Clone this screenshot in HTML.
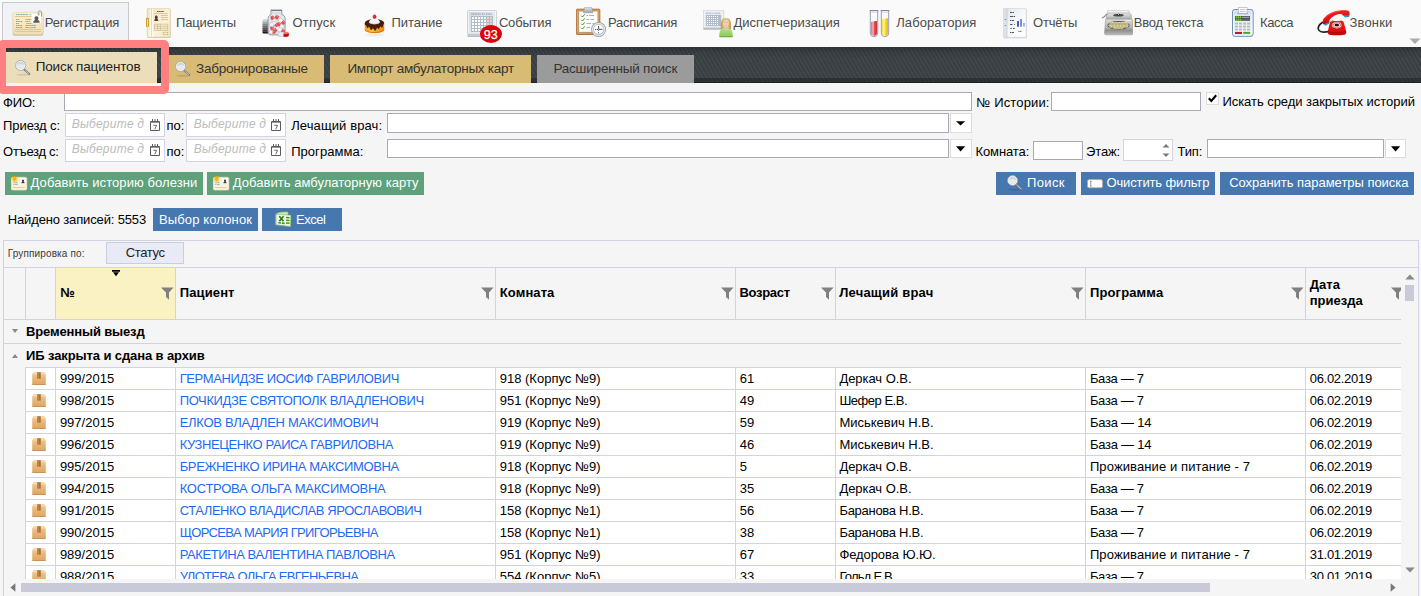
<!DOCTYPE html>
<html lang="ru"><head><meta charset="utf-8"><title>Поиск пациентов</title>
<style>
html,body{margin:0;padding:0}
body{width:1421px;height:596px;overflow:hidden;background:#f5f5f5;font-family:"Liberation Sans",sans-serif;font-size:13px;color:#000;position:relative}
div,span,svg{position:absolute;box-sizing:border-box}
.t{white-space:pre}
.nav{left:0;top:0;width:1421px;height:47px;background:#fafafa}
.navact{left:2px;top:2px;width:127px;height:46px;background:#f1f2f5;border:1px solid #c9c9c9;border-bottom:0}
.bar{left:0;top:47px;width:1421px;height:36px;background:linear-gradient(to bottom,rgba(0,0,0,.24) 0,rgba(0,0,0,.07) 6px,rgba(0,0,0,0) 12px),repeating-linear-gradient(60deg,#383e42 0,#383e42 1.8px,#40474b 1.8px,#40474b 3.6px)}
.barb{left:0;top:78px;width:1421px;height:5px;background:rgba(22,25,29,.42);border-bottom:1px solid rgba(0,0,0,.3)}
.tab{top:55px;height:28px;background:#d8bb74}
.tab.act{top:52px;height:31px;background:#ecdeba}
.tab.gray{background:#9b9b9b}
.hl{z-index:5;left:-2px;top:40px;width:171px;height:54px;border:8px solid #ff8080;border-radius:5px}
.inp{background:#fff;border:1px solid #a9a9b4}
.dinp{background:#fff;border:1px solid #d3d3e4}
.ddb{background:#fff;border:1px solid #dcdcdc}
.btn{height:23px;top:172px;background:#4677ae}
.btn.g{background:#5ea17b}
.gline{background:#d1d2e3}
.cell{background:#fff}
</style></head>
<body>
<div class="nav"></div><div class="navact"></div>
<div class="bar"></div><div class="barb"></div>
<div class="tab act" style="left:6px;width:151px"></div><div class="tab" style="left:163px;width:161px"></div><div class="tab" style="left:330px;width:201px"></div><div class="tab gray" style="left:537px;width:157px"></div>
<div class="hl"></div>
<svg style="left:1409px;top:38px" width="12" height="7" viewBox="0 0 12 7"><path d="M0.5 0.5h11L6 6z" fill="#aaa"/></svg>
<div class="inp" style="left:64px;top:92px;width:908px;height:19px"></div><div class="inp" style="left:1051px;top:92px;width:150px;height:19px"></div><div class="ddb" style="left:1206px;top:92px;width:13px;height:13px"></div><svg style="left:1207px;top:93px" width="11" height="11" viewBox="0 0 11 11"><path d="M1.800 5.300l2.500 2.700L9.200 2.300" fill="none" stroke="#000" stroke-width="2.100"/></svg>
<div class="dinp" style="left:65px;top:113px;width:100px;height:24px"></div><div class="dinp" style="left:186px;top:113px;width:100px;height:24px"></div><div class="inp" style="left:387px;top:113px;width:562px;height:20px"></div><div class="ddb" style="left:950px;top:113px;width:22px;height:20px"></div><div class="dinp" style="left:65px;top:139px;width:100px;height:23px"></div><div class="dinp" style="left:186px;top:139px;width:100px;height:23px"></div><div class="inp" style="left:387px;top:139px;width:562px;height:19px"></div><div class="ddb" style="left:950px;top:139px;width:22px;height:19px"></div>
<div class="inp" style="left:1033px;top:141px;width:50px;height:19px"></div><div class="dinp" style="left:1123px;top:139px;width:50px;height:22px"></div><div class="inp" style="left:1207px;top:139px;width:177px;height:19px"></div><div class="ddb" style="left:1385px;top:139px;width:21px;height:19px"></div>
<svg style="left:956px;top:121px" width="10" height="6" viewBox="0 0 10 6"><path d="M0 0.200h9.200L4.600 4.4z" fill="#000"/></svg><svg style="left:956px;top:146px" width="10" height="6" viewBox="0 0 10 6"><path d="M0 0.200h9.200L4.600 5.6z" fill="#000"/></svg><svg style="left:1391px;top:146px" width="10" height="6" viewBox="0 0 10 6"><path d="M0 0.200h9.200L4.600 5.6z" fill="#000"/></svg><svg style="left:1162px;top:143px" width="8" height="15" viewBox="0 0 8 15"><path d="M0.6 4.5L4 1l3.4 3.5z M0.6 10.5L4 14l3.4-3.5z" fill="#777"/></svg>
<svg style="left:150px;top:119px" width="10" height="12" viewBox="0 0 10 12"><path d="M0.500 2.500h9v9h-9z" fill="#fff" stroke="#5c5c5c" stroke-width="1"/><path d="M1 3.300h8" stroke="#5c5c5c" stroke-width=".8"/><path d="M2.500 0v3M5 0v3M7.500 0v3" stroke="#5c5c5c" stroke-width="1"/><path d="M3.300 6.300h3.200l-1.700 4" fill="none" stroke="#5c5c5c" stroke-width=".9"/></svg><svg style="left:150px;top:144px" width="10" height="12" viewBox="0 0 10 12"><path d="M0.500 2.500h9v9h-9z" fill="#fff" stroke="#5c5c5c" stroke-width="1"/><path d="M1 3.300h8" stroke="#5c5c5c" stroke-width=".8"/><path d="M2.500 0v3M5 0v3M7.500 0v3" stroke="#5c5c5c" stroke-width="1"/><path d="M3.300 6.300h3.200l-1.700 4" fill="none" stroke="#5c5c5c" stroke-width=".9"/></svg><svg style="left:271px;top:119px" width="10" height="12" viewBox="0 0 10 12"><path d="M0.500 2.500h9v9h-9z" fill="#fff" stroke="#5c5c5c" stroke-width="1"/><path d="M1 3.300h8" stroke="#5c5c5c" stroke-width=".8"/><path d="M2.500 0v3M5 0v3M7.500 0v3" stroke="#5c5c5c" stroke-width="1"/><path d="M3.300 6.300h3.200l-1.700 4" fill="none" stroke="#5c5c5c" stroke-width=".9"/></svg><svg style="left:271px;top:144px" width="10" height="12" viewBox="0 0 10 12"><path d="M0.500 2.500h9v9h-9z" fill="#fff" stroke="#5c5c5c" stroke-width="1"/><path d="M1 3.300h8" stroke="#5c5c5c" stroke-width=".8"/><path d="M2.500 0v3M5 0v3M7.500 0v3" stroke="#5c5c5c" stroke-width="1"/><path d="M3.300 6.300h3.200l-1.700 4" fill="none" stroke="#5c5c5c" stroke-width=".9"/></svg>
<div class="btn g" style="left:5px;width:198px"></div><div class="btn g" style="left:207px;width:217px"></div><div class="btn" style="left:996px;width:80px"></div><div class="btn" style="left:1081px;width:134px"></div><div class="btn" style="left:1220px;width:194px"></div><div class="btn" style="left:153px;top:208px;width:105px"></div><div class="btn" style="left:262px;top:208px;width:80px"></div>
<div style="left:3px;top:240px;width:1416px;height:360px;border:1px solid #d1d2e3;background:#f5f5f5"></div>
<div class="gline" style="left:4px;top:267px;width:1414px;height:1px"></div><div style="left:106px;top:242px;width:78px;height:22px;background:#e8ebf6;border:1px solid #c8cde2"></div>
<div style="left:56px;top:268px;width:119px;height:51px;background:#fbf2c3"></div><div class="gline" style="left:4px;top:319px;width:1397px;height:1px"></div><div class="gline" style="left:4px;top:343px;width:1397px;height:1px"></div><div class="gline" style="left:25px;top:367px;width:1376px;height:1px"></div>
<div class="gline" style="left:25px;top:268px;width:1px;height:51px"></div><div class="gline" style="left:55px;top:268px;width:1px;height:51px"></div><div class="gline" style="left:175px;top:268px;width:1px;height:51px"></div><div class="gline" style="left:495px;top:268px;width:1px;height:51px"></div><div class="gline" style="left:735px;top:268px;width:1px;height:51px"></div><div class="gline" style="left:835px;top:268px;width:1px;height:51px"></div><div class="gline" style="left:1085px;top:268px;width:1px;height:51px"></div><div class="gline" style="left:1305px;top:268px;width:1px;height:51px"></div>
<div style="left:0;top:0;width:1401px;height:579px;overflow:hidden">
<div class="cell" style="left:26px;top:368px;width:1375px;height:240px"></div>
<div class="gline" style="left:25px;top:389px;width:1376px;height:1px"></div><div class="gline" style="left:25px;top:411px;width:1376px;height:1px"></div><div class="gline" style="left:25px;top:433px;width:1376px;height:1px"></div><div class="gline" style="left:25px;top:455px;width:1376px;height:1px"></div><div class="gline" style="left:25px;top:477px;width:1376px;height:1px"></div><div class="gline" style="left:25px;top:499px;width:1376px;height:1px"></div><div class="gline" style="left:25px;top:521px;width:1376px;height:1px"></div><div class="gline" style="left:25px;top:543px;width:1376px;height:1px"></div><div class="gline" style="left:25px;top:565px;width:1376px;height:1px"></div><div class="gline" style="left:25px;top:587px;width:1376px;height:1px"></div><div class="gline" style="left:25px;top:609px;width:1376px;height:1px"></div>
<div class="gline" style="left:25px;top:367px;width:1px;height:240px"></div><div class="gline" style="left:55px;top:367px;width:1px;height:240px"></div><div class="gline" style="left:175px;top:367px;width:1px;height:240px"></div><div class="gline" style="left:495px;top:367px;width:1px;height:240px"></div><div class="gline" style="left:735px;top:367px;width:1px;height:240px"></div><div class="gline" style="left:835px;top:367px;width:1px;height:240px"></div><div class="gline" style="left:1085px;top:367px;width:1px;height:240px"></div><div class="gline" style="left:1305px;top:367px;width:1px;height:240px"></div>
<svg style="left:32px;top:372px" width="14" height="13" viewBox="0 0 14 14" preserveAspectRatio="none"><defs><linearGradient id="bx0" x1="0" y1="0" x2="0" y2="1"><stop offset="0" stop-color="#f0c994"/><stop offset="1" stop-color="#e2a662"/></linearGradient></defs><path d="M0.200 2.600L1.600 0.300h10.800l1.400 2.300V13H0.200z" fill="url(#bx0)"/><path d="M0.200 2.600L1.600 0.300h10.800l1.400 2.300z" fill="#f5d9b0"/><path d="M5.200 0.300h3.600v7.200l-0.900-0.900-0.900 0.900-0.900-0.900-0.900 0.900z" fill="#a9723c"/><path d="M6.100 0.300h0.900v6.500h-0.900z" fill="#c08a52"/><path d="M0.200 12.900h13.600v1.100H0.200z" fill="#c4935f"/></svg><svg style="left:32px;top:394px" width="14" height="13" viewBox="0 0 14 14" preserveAspectRatio="none"><defs><linearGradient id="bx1" x1="0" y1="0" x2="0" y2="1"><stop offset="0" stop-color="#f0c994"/><stop offset="1" stop-color="#e2a662"/></linearGradient></defs><path d="M0.200 2.600L1.600 0.300h10.800l1.400 2.300V13H0.200z" fill="url(#bx1)"/><path d="M0.200 2.600L1.600 0.300h10.800l1.400 2.300z" fill="#f5d9b0"/><path d="M5.200 0.300h3.600v7.200l-0.900-0.900-0.900 0.900-0.900-0.900-0.900 0.900z" fill="#a9723c"/><path d="M6.100 0.300h0.900v6.500h-0.900z" fill="#c08a52"/><path d="M0.200 12.900h13.600v1.100H0.200z" fill="#c4935f"/></svg><svg style="left:32px;top:416px" width="14" height="13" viewBox="0 0 14 14" preserveAspectRatio="none"><defs><linearGradient id="bx2" x1="0" y1="0" x2="0" y2="1"><stop offset="0" stop-color="#f0c994"/><stop offset="1" stop-color="#e2a662"/></linearGradient></defs><path d="M0.200 2.600L1.600 0.300h10.800l1.400 2.300V13H0.200z" fill="url(#bx2)"/><path d="M0.200 2.600L1.600 0.300h10.800l1.400 2.300z" fill="#f5d9b0"/><path d="M5.200 0.300h3.600v7.200l-0.900-0.900-0.900 0.900-0.900-0.900-0.900 0.900z" fill="#a9723c"/><path d="M6.100 0.300h0.900v6.500h-0.900z" fill="#c08a52"/><path d="M0.200 12.900h13.600v1.100H0.200z" fill="#c4935f"/></svg><svg style="left:32px;top:438px" width="14" height="13" viewBox="0 0 14 14" preserveAspectRatio="none"><defs><linearGradient id="bx3" x1="0" y1="0" x2="0" y2="1"><stop offset="0" stop-color="#f0c994"/><stop offset="1" stop-color="#e2a662"/></linearGradient></defs><path d="M0.200 2.600L1.600 0.300h10.800l1.400 2.300V13H0.200z" fill="url(#bx3)"/><path d="M0.200 2.600L1.600 0.300h10.800l1.400 2.300z" fill="#f5d9b0"/><path d="M5.200 0.300h3.600v7.200l-0.900-0.900-0.900 0.900-0.900-0.900-0.900 0.900z" fill="#a9723c"/><path d="M6.100 0.300h0.900v6.500h-0.900z" fill="#c08a52"/><path d="M0.200 12.900h13.600v1.100H0.200z" fill="#c4935f"/></svg><svg style="left:32px;top:460px" width="14" height="13" viewBox="0 0 14 14" preserveAspectRatio="none"><defs><linearGradient id="bx4" x1="0" y1="0" x2="0" y2="1"><stop offset="0" stop-color="#f0c994"/><stop offset="1" stop-color="#e2a662"/></linearGradient></defs><path d="M0.200 2.600L1.600 0.300h10.800l1.400 2.300V13H0.200z" fill="url(#bx4)"/><path d="M0.200 2.600L1.600 0.300h10.800l1.400 2.300z" fill="#f5d9b0"/><path d="M5.200 0.300h3.600v7.200l-0.900-0.900-0.900 0.900-0.900-0.900-0.900 0.900z" fill="#a9723c"/><path d="M6.100 0.300h0.900v6.500h-0.900z" fill="#c08a52"/><path d="M0.200 12.900h13.600v1.100H0.200z" fill="#c4935f"/></svg><svg style="left:32px;top:482px" width="14" height="13" viewBox="0 0 14 14" preserveAspectRatio="none"><defs><linearGradient id="bx5" x1="0" y1="0" x2="0" y2="1"><stop offset="0" stop-color="#f0c994"/><stop offset="1" stop-color="#e2a662"/></linearGradient></defs><path d="M0.200 2.600L1.600 0.300h10.800l1.400 2.300V13H0.200z" fill="url(#bx5)"/><path d="M0.200 2.600L1.600 0.300h10.800l1.400 2.300z" fill="#f5d9b0"/><path d="M5.200 0.300h3.600v7.200l-0.900-0.900-0.900 0.900-0.900-0.900-0.900 0.900z" fill="#a9723c"/><path d="M6.100 0.300h0.900v6.500h-0.900z" fill="#c08a52"/><path d="M0.200 12.900h13.600v1.100H0.200z" fill="#c4935f"/></svg><svg style="left:32px;top:504px" width="14" height="13" viewBox="0 0 14 14" preserveAspectRatio="none"><defs><linearGradient id="bx6" x1="0" y1="0" x2="0" y2="1"><stop offset="0" stop-color="#f0c994"/><stop offset="1" stop-color="#e2a662"/></linearGradient></defs><path d="M0.200 2.600L1.600 0.300h10.800l1.400 2.300V13H0.200z" fill="url(#bx6)"/><path d="M0.200 2.600L1.600 0.300h10.800l1.400 2.300z" fill="#f5d9b0"/><path d="M5.200 0.300h3.600v7.200l-0.900-0.900-0.900 0.900-0.900-0.900-0.900 0.900z" fill="#a9723c"/><path d="M6.100 0.300h0.900v6.500h-0.900z" fill="#c08a52"/><path d="M0.200 12.900h13.600v1.100H0.200z" fill="#c4935f"/></svg><svg style="left:32px;top:526px" width="14" height="13" viewBox="0 0 14 14" preserveAspectRatio="none"><defs><linearGradient id="bx7" x1="0" y1="0" x2="0" y2="1"><stop offset="0" stop-color="#f0c994"/><stop offset="1" stop-color="#e2a662"/></linearGradient></defs><path d="M0.200 2.600L1.600 0.300h10.800l1.400 2.300V13H0.200z" fill="url(#bx7)"/><path d="M0.200 2.600L1.600 0.300h10.800l1.400 2.300z" fill="#f5d9b0"/><path d="M5.200 0.300h3.600v7.200l-0.900-0.900-0.900 0.900-0.900-0.900-0.900 0.900z" fill="#a9723c"/><path d="M6.100 0.300h0.900v6.500h-0.900z" fill="#c08a52"/><path d="M0.200 12.900h13.600v1.100H0.200z" fill="#c4935f"/></svg><svg style="left:32px;top:548px" width="14" height="13" viewBox="0 0 14 14" preserveAspectRatio="none"><defs><linearGradient id="bx8" x1="0" y1="0" x2="0" y2="1"><stop offset="0" stop-color="#f0c994"/><stop offset="1" stop-color="#e2a662"/></linearGradient></defs><path d="M0.200 2.600L1.600 0.300h10.800l1.400 2.300V13H0.200z" fill="url(#bx8)"/><path d="M0.200 2.600L1.600 0.300h10.800l1.400 2.300z" fill="#f5d9b0"/><path d="M5.200 0.300h3.600v7.200l-0.900-0.900-0.900 0.900-0.900-0.900-0.900 0.900z" fill="#a9723c"/><path d="M6.100 0.300h0.900v6.500h-0.900z" fill="#c08a52"/><path d="M0.200 12.900h13.600v1.100H0.200z" fill="#c4935f"/></svg><svg style="left:32px;top:570px" width="14" height="13" viewBox="0 0 14 14" preserveAspectRatio="none"><defs><linearGradient id="bx9" x1="0" y1="0" x2="0" y2="1"><stop offset="0" stop-color="#f0c994"/><stop offset="1" stop-color="#e2a662"/></linearGradient></defs><path d="M0.200 2.600L1.600 0.300h10.800l1.400 2.300V13H0.200z" fill="url(#bx9)"/><path d="M0.200 2.600L1.600 0.300h10.800l1.400 2.300z" fill="#f5d9b0"/><path d="M5.200 0.300h3.600v7.200l-0.900-0.900-0.900 0.900-0.900-0.900-0.900 0.900z" fill="#a9723c"/><path d="M6.100 0.300h0.900v6.500h-0.900z" fill="#c08a52"/><path d="M0.200 12.900h13.600v1.100H0.200z" fill="#c4935f"/></svg>
<span class="t" style="left:59.9px;top:370.5px;font-size:13px;line-height:16px;">999/2015</span>
<span class="t" style="left:179.7px;top:370.5px;font-size:13px;line-height:16px;letter-spacing:-0.39px;color:#1f69f0;">ГЕРМАНИДЗЕ ИОСИФ ГАВРИЛОВИЧ</span>
<span class="t" style="left:499.7px;top:370.5px;font-size:13px;line-height:16px;letter-spacing:0.01px;">918 (Корпус №9)</span>
<span class="t" style="left:739.7px;top:370.5px;font-size:13px;line-height:16px;">61</span>
<span class="t" style="left:839.4px;top:370.5px;font-size:13px;line-height:16px;letter-spacing:-0.04px;">Деркач О.В.</span>
<span class="t" style="left:1089.9px;top:370.5px;font-size:13px;line-height:16px;letter-spacing:-0.30px;">База — 7</span>
<span class="t" style="left:1309.7px;top:370.5px;font-size:13px;line-height:16px;letter-spacing:-0.29px;">06.02.2019</span>
<span class="t" style="left:59.9px;top:392.5px;font-size:13px;line-height:16px;">998/2015</span>
<span class="t" style="left:179.7px;top:392.5px;font-size:13px;line-height:16px;letter-spacing:-0.38px;color:#1f69f0;">ПОЧКИДЗЕ СВЯТОПОЛК ВЛАДЛЕНОВИЧ</span>
<span class="t" style="left:499.7px;top:392.5px;font-size:13px;line-height:16px;letter-spacing:0.01px;">951 (Корпус №9)</span>
<span class="t" style="left:739.7px;top:392.5px;font-size:13px;line-height:16px;">49</span>
<span class="t" style="left:839.4px;top:392.5px;font-size:13px;line-height:16px;letter-spacing:-0.48px;">Шефер Е.В.</span>
<span class="t" style="left:1089.9px;top:392.5px;font-size:13px;line-height:16px;letter-spacing:-0.30px;">База — 7</span>
<span class="t" style="left:1309.7px;top:392.5px;font-size:13px;line-height:16px;letter-spacing:-0.29px;">06.02.2019</span>
<span class="t" style="left:59.9px;top:414.5px;font-size:13px;line-height:16px;">997/2015</span>
<span class="t" style="left:179.7px;top:414.5px;font-size:13px;line-height:16px;letter-spacing:-0.28px;color:#1f69f0;">ЕЛКОВ ВЛАДЛЕН МАКСИМОВИЧ</span>
<span class="t" style="left:499.7px;top:414.5px;font-size:13px;line-height:16px;letter-spacing:0.01px;">919 (Корпус №9)</span>
<span class="t" style="left:739.7px;top:414.5px;font-size:13px;line-height:16px;">59</span>
<span class="t" style="left:839.4px;top:414.5px;font-size:13px;line-height:16px;">Миськевич Н.В.</span>
<span class="t" style="left:1089.9px;top:414.5px;font-size:13px;line-height:16px;letter-spacing:-0.24px;">База — 14</span>
<span class="t" style="left:1309.7px;top:414.5px;font-size:13px;line-height:16px;letter-spacing:-0.29px;">06.02.2019</span>
<span class="t" style="left:59.9px;top:436.5px;font-size:13px;line-height:16px;">996/2015</span>
<span class="t" style="left:179.7px;top:436.5px;font-size:13px;line-height:16px;letter-spacing:-0.42px;color:#1f69f0;">КУЗНЕЦЕНКО РАИСА ГАВРИЛОВНА</span>
<span class="t" style="left:499.7px;top:436.5px;font-size:13px;line-height:16px;letter-spacing:0.01px;">919 (Корпус №9)</span>
<span class="t" style="left:739.7px;top:436.5px;font-size:13px;line-height:16px;">46</span>
<span class="t" style="left:839.4px;top:436.5px;font-size:13px;line-height:16px;">Миськевич Н.В.</span>
<span class="t" style="left:1089.9px;top:436.5px;font-size:13px;line-height:16px;letter-spacing:-0.24px;">База — 14</span>
<span class="t" style="left:1309.7px;top:436.5px;font-size:13px;line-height:16px;letter-spacing:-0.29px;">06.02.2019</span>
<span class="t" style="left:59.9px;top:458.5px;font-size:13px;line-height:16px;">995/2015</span>
<span class="t" style="left:179.7px;top:458.5px;font-size:13px;line-height:16px;letter-spacing:-0.37px;color:#1f69f0;">БРЕЖНЕНКО ИРИНА МАКСИМОВНА</span>
<span class="t" style="left:499.7px;top:458.5px;font-size:13px;line-height:16px;letter-spacing:0.01px;">918 (Корпус №9)</span>
<span class="t" style="left:739.7px;top:458.5px;font-size:13px;line-height:16px;">5</span>
<span class="t" style="left:839.4px;top:458.5px;font-size:13px;line-height:16px;letter-spacing:-0.04px;">Деркач О.В.</span>
<span class="t" style="left:1089.9px;top:458.5px;font-size:13px;line-height:16px;letter-spacing:0.11px;">Проживание и питание - 7</span>
<span class="t" style="left:1309.7px;top:458.5px;font-size:13px;line-height:16px;letter-spacing:-0.29px;">06.02.2019</span>
<span class="t" style="left:59.9px;top:480.5px;font-size:13px;line-height:16px;">994/2015</span>
<span class="t" style="left:179.7px;top:480.5px;font-size:13px;line-height:16px;letter-spacing:-0.26px;color:#1f69f0;">КОСТРОВА ОЛЬГА МАКСИМОВНА</span>
<span class="t" style="left:499.7px;top:480.5px;font-size:13px;line-height:16px;letter-spacing:0.01px;">918 (Корпус №9)</span>
<span class="t" style="left:739.7px;top:480.5px;font-size:13px;line-height:16px;">35</span>
<span class="t" style="left:839.4px;top:480.5px;font-size:13px;line-height:16px;letter-spacing:-0.04px;">Деркач О.В.</span>
<span class="t" style="left:1089.9px;top:480.5px;font-size:13px;line-height:16px;letter-spacing:-0.30px;">База — 7</span>
<span class="t" style="left:1309.7px;top:480.5px;font-size:13px;line-height:16px;letter-spacing:-0.29px;">06.02.2019</span>
<span class="t" style="left:59.9px;top:502.5px;font-size:13px;line-height:16px;">991/2015</span>
<span class="t" style="left:179.7px;top:502.5px;font-size:13px;line-height:16px;letter-spacing:-0.44px;color:#1f69f0;">СТАЛЕНКО ВЛАДИСЛАВ ЯРОСЛАВОВИЧ</span>
<span class="t" style="left:499.7px;top:502.5px;font-size:13px;line-height:16px;letter-spacing:0.01px;">158 (Корпус №1)</span>
<span class="t" style="left:739.7px;top:502.5px;font-size:13px;line-height:16px;">56</span>
<span class="t" style="left:839.4px;top:502.5px;font-size:13px;line-height:16px;letter-spacing:-0.28px;">Баранова Н.В.</span>
<span class="t" style="left:1089.9px;top:502.5px;font-size:13px;line-height:16px;letter-spacing:-0.30px;">База — 7</span>
<span class="t" style="left:1309.7px;top:502.5px;font-size:13px;line-height:16px;letter-spacing:-0.29px;">06.02.2019</span>
<span class="t" style="left:59.9px;top:524.5px;font-size:13px;line-height:16px;">990/2015</span>
<span class="t" style="left:179.7px;top:524.5px;font-size:13px;line-height:16px;letter-spacing:-0.64px;color:#1f69f0;">ЩОРСЕВА МАРИЯ ГРИГОРЬЕВНА</span>
<span class="t" style="left:499.7px;top:524.5px;font-size:13px;line-height:16px;letter-spacing:0.01px;">158 (Корпус №1)</span>
<span class="t" style="left:739.7px;top:524.5px;font-size:13px;line-height:16px;">38</span>
<span class="t" style="left:839.4px;top:524.5px;font-size:13px;line-height:16px;letter-spacing:-0.28px;">Баранова Н.В.</span>
<span class="t" style="left:1089.9px;top:524.5px;font-size:13px;line-height:16px;letter-spacing:-0.30px;">База — 7</span>
<span class="t" style="left:1309.7px;top:524.5px;font-size:13px;line-height:16px;letter-spacing:-0.29px;">06.02.2019</span>
<span class="t" style="left:59.9px;top:546.5px;font-size:13px;line-height:16px;">989/2015</span>
<span class="t" style="left:179.7px;top:546.5px;font-size:13px;line-height:16px;letter-spacing:-0.42px;color:#1f69f0;">РАКЕТИНА ВАЛЕНТИНА ПАВЛОВНА</span>
<span class="t" style="left:499.7px;top:546.5px;font-size:13px;line-height:16px;letter-spacing:0.01px;">951 (Корпус №9)</span>
<span class="t" style="left:739.7px;top:546.5px;font-size:13px;line-height:16px;">67</span>
<span class="t" style="left:839.4px;top:546.5px;font-size:13px;line-height:16px;letter-spacing:-0.08px;">Федорова Ю.Ю.</span>
<span class="t" style="left:1089.9px;top:546.5px;font-size:13px;line-height:16px;letter-spacing:0.11px;">Проживание и питание - 7</span>
<span class="t" style="left:1309.7px;top:546.5px;font-size:13px;line-height:16px;letter-spacing:-0.29px;">31.01.2019</span>
<span class="t" style="left:59.9px;top:568.5px;font-size:13px;line-height:16px;">988/2015</span>
<span class="t" style="left:179.7px;top:568.5px;font-size:13px;line-height:16px;letter-spacing:-0.71px;color:#1f69f0;">УЛОТЕВА ОЛЬГА ЕВГЕНЬЕВНА</span>
<span class="t" style="left:499.7px;top:568.5px;font-size:13px;line-height:16px;letter-spacing:0.01px;">554 (Корпус №5)</span>
<span class="t" style="left:739.7px;top:568.5px;font-size:13px;line-height:16px;">33</span>
<span class="t" style="left:839.4px;top:568.5px;font-size:13px;line-height:16px;letter-spacing:-0.78px;">Гольд Е.В.</span>
<span class="t" style="left:1089.9px;top:568.5px;font-size:13px;line-height:16px;letter-spacing:-0.30px;">База — 7</span>
<span class="t" style="left:1309.7px;top:568.5px;font-size:13px;line-height:16px;letter-spacing:-0.29px;">30.01.2019</span>
</div>
<svg style="left:161px;top:287px" width="13" height="13" viewBox="0 0 13 13"><path d="M0 0.500h12.500L8 5.500V12.800L5 10V5.500z" fill="#808080"/></svg><svg style="left:481px;top:287px" width="13" height="13" viewBox="0 0 13 13"><path d="M0 0.500h12.500L8 5.500V12.800L5 10V5.500z" fill="#808080"/></svg><svg style="left:721px;top:287px" width="13" height="13" viewBox="0 0 13 13"><path d="M0 0.500h12.500L8 5.500V12.800L5 10V5.500z" fill="#808080"/></svg><svg style="left:821px;top:287px" width="13" height="13" viewBox="0 0 13 13"><path d="M0 0.500h12.500L8 5.500V12.800L5 10V5.500z" fill="#808080"/></svg><svg style="left:1071px;top:287px" width="13" height="13" viewBox="0 0 13 13"><path d="M0 0.500h12.500L8 5.500V12.800L5 10V5.500z" fill="#808080"/></svg><svg style="left:1291px;top:287px" width="13" height="13" viewBox="0 0 13 13"><path d="M0 0.500h12.500L8 5.500V12.800L5 10V5.500z" fill="#808080"/></svg><svg style="left:1391px;top:287px" width="10" height="13" viewBox="0 0 10 13"><path d="M0 0.500h12.500L8 5.500V12.800L5 10V5.500z" fill="#808080"/></svg>
<svg style="left:111px;top:270px" width="10" height="7" viewBox="0 0 10 7"><path d="M1 0h8v1.700H1zM2 2.200h6L5 6.300z" fill="#000"/></svg>
<svg style="left:11px;top:328px" width="8" height="6" viewBox="0 0 8 6"><path d="M1 1h6L4 5z" fill="#888"/></svg><svg style="left:11px;top:353px" width="8" height="6" viewBox="0 0 8 6"><path d="M1 5h6L4 1z" fill="#888"/></svg>
<svg style="left:1405px;top:274px" width="10" height="6" viewBox="0 0 10 6"><path d="M0.3 5.4h9.4L5 0.4z" fill="#888"/></svg><div style="left:1405px;top:285px;width:9px;height:16px;background:#c8cad9"></div><svg style="left:1405px;top:567px" width="10" height="6" viewBox="0 0 10 6"><path d="M0.3 0.6h9.4L5 5.6z" fill="#888"/></svg>
<div style="left:21px;top:583px;width:1189px;height:9px;background:#c8cad9"></div><svg style="left:10px;top:583px" width="6" height="9" viewBox="0 0 6 9"><path d="M5.4 0.2v8.6L0.4 4.5z" fill="#777"/></svg><svg style="left:1390px;top:583px" width="6" height="9" viewBox="0 0 6 9"><path d="M0.6 0.2v8.6L5.6 4.5z" fill="#777"/></svg>
<svg style="left:12px;top:9px" width="32" height="28" viewBox="0 0 32 28"><defs><linearGradient id="rg" x1="0" y1="0" x2="0" y2="1"><stop offset="0" stop-color="#faf0d2"/><stop offset="1" stop-color="#f0dfb2"/></linearGradient></defs><rect x="0.9" y="3.900" width="30.300" height="22.700" rx="2.200" fill="#a8966e" opacity=".8"/><rect x="0.9" y="3.200" width="30.300" height="22.300" rx="2.200" fill="url(#rg)" stroke="#e2d2a8" stroke-width=".6"/><path d="M4 5.500h12" stroke="#2a7898" stroke-width=".65" opacity=".8" stroke-dasharray="1.300 .35"/><path d="M17.500 5.500h2" stroke="#2a7898" stroke-width=".65" opacity=".5"/><path d="M3 7.500h17" stroke="#d8c596" stroke-width=".9"/><g stroke="#2a7898" stroke-width=".65" opacity=".85" stroke-dasharray="1.300 .35"><path d="M4 10.500h3.500M4 12.500h6.500M4 14.500h3M4 16.500h6.500M4 18.500h6.500"/><path d="M13.500 10.500h6M13.500 12.500h4.500M14.500 14.500h8M13.500 16.500h10.500M13.500 18.500h4M18.500 18.500h5.500"/></g><path d="M3 20.500h26M3 22.500h26" stroke="#d8c596" stroke-width=".9"/><rect x="19.900" y="5.300" width="10" height="9.800" fill="#a89770" opacity=".5"/><rect x="19.600" y="4.900" width="10" height="9.800" fill="#fff"/><path d="M21.300 13.700c0-2.200.8-2.300 2-2.700-1.400-1.200-.9-3.700 1.200-3.700s2.600 2.500 1.200 3.700c1.200.4 2 .5 2 2.700z" fill="#5d5a55"/><path d="M26.300 6.500V3.500a1.600 1.600 0 0 1 3.200 0v4" fill="none" stroke="#8d8d8d" stroke-width=".8"/><path d="M27.500 6.500V4" stroke="#bbb" stroke-width=".7"/></svg>
<svg style="left:146px;top:8px" width="26" height="30" viewBox="0 0 26 30"><defs><linearGradient id="pg" x1="0" y1="0" x2="1" y2="1"><stop offset="0" stop-color="#f3e2b8"/><stop offset=".6" stop-color="#fbf3dc"/><stop offset="1" stop-color="#f3e3bb"/></linearGradient></defs><rect x="1.500" y="0.9" width="23" height="29" rx=".8" fill="#b9a780" opacity=".7"/><rect x="1.200" y="0.400" width="23" height="28.900" rx=".8" fill="url(#pg)" stroke="#dccba0" stroke-width=".6"/><path d="M4.300 0.700v28.300M6.700 0.700v28.300" stroke="#fffdf5" stroke-width=".9"/><path d="M5.500 0.700v28.300" stroke="#e3d2a6" stroke-width=".7"/><rect x="0.500" y="10.300" width="2" height="8" fill="#f0dc9a" stroke="#c59410" stroke-width=".8"/><path d="M11 3.500h7" stroke="#5a5346" stroke-width="1" stroke-dasharray="1.600 .5"/><path d="M8 5.600h14" stroke="#d4c190" stroke-width=".8"/><path d="M8.300 13c0-1.600.4-1.800 1.100-2-.9-.8-.8-3.500.9-3.500s1.800 2.700.9 3.500c.7.200 1.100.4 1.100 2z" fill="#4a4032"/><path d="M15 7.500h7M15 9.500h7M15 11.600h7" stroke="#d4c190" stroke-width=".9"/><path d="M8.400 16.200h13.300v6.200H8.400zM8.400 18.300h13.300M8.400 20.300h13.300M11.500 16.200v6.200M14.300 16.200v6.200" fill="none" stroke="#d0bd8c" stroke-width=".8"/><rect x="17.200" y="24.300" width="4.500" height="2.300" fill="#fbf3dc" stroke="#d0bd8c" stroke-width=".8"/></svg>
<svg style="left:262px;top:9px" width="28" height="28" viewBox="0 0 28 28"><defs><linearGradient id="lg" x1="0" y1="0" x2="0" y2="1"><stop offset="0" stop-color="#e8e8e8"/><stop offset=".35" stop-color="#8a8a8a"/><stop offset="1" stop-color="#0c0c0c"/></linearGradient><linearGradient id="cp" x1="0" y1="0" x2="0" y2="1"><stop offset="0" stop-color="#ff6a6a"/><stop offset=".5" stop-color="#d60d12"/><stop offset="1" stop-color="#a00"/></linearGradient></defs><path d="M1.500 10h5v14.500h-5a1 1 0 0 1-1-1v-12.500a1 1 0 0 1 1-1z" fill="url(#lg)"/><path d="M0.500 12.500h6M0.500 14.500h6M0.500 16.500h6M0.500 18.500h6M0.500 20.500h6M0.500 22.500h6" stroke="#fff" stroke-width=".4" opacity=".45"/><path d="M9 1.300h10.800v4.200c2.200.7 3.300 1.900 3.300 4.200v13.300c0 1.900-1 2.900-2.900 2.900H9c-1.900 0-2.900-1-2.900-2.900V9.700c0-2.300 1.100-3.500 2.900-4.200z" fill="#e3e7ec" stroke="#8793a6" stroke-width=".9"/><path d="M8.800 1.300h11.200" stroke="#6f7a8c" stroke-width="1.200"/><path d="M9.300 3.500c3 1 7 1 10.300 0" fill="none" stroke="#c5ccd6" stroke-width=".7"/><g transform="rotate(62 11.3 10.3)"><rect x="7.50" y="8.45" width="7.60" height="3.70" rx="1.85" fill="#f1f3f6" stroke="#aeb4bd" stroke-width=".35"/><path d="M9.35 8.45h1.95v3.70h-1.95a1.85 1.85 0 0 1 0-3.70z" fill="#e2474c"/><path d="M8.70 9.45h5.20" stroke="#fff" stroke-width=".6" opacity=".55"/></g><g transform="rotate(35 16.5 9.3)"><rect x="12.70" y="7.45" width="7.60" height="3.70" rx="1.85" fill="#f1f3f6" stroke="#aeb4bd" stroke-width=".35"/><path d="M14.55 7.45h1.95v3.70h-1.95a1.85 1.85 0 0 1 0-3.70z" fill="#e2474c"/><path d="M13.90 8.45h5.20" stroke="#fff" stroke-width=".6" opacity=".55"/></g><g transform="rotate(40 20 12.5)"><rect x="16.20" y="10.65" width="7.60" height="3.70" rx="1.85" fill="#e2474c" stroke="#aeb4bd" stroke-width=".35"/><path d="M18.05 10.65h1.95v3.70h-1.95a1.85 1.85 0 0 1 0-3.70z" fill="#f1f3f6"/><path d="M17.40 11.65h5.20" stroke="#fff" stroke-width=".6" opacity=".55"/></g><g transform="rotate(35 13.2 15.2)"><rect x="9.40" y="13.35" width="7.60" height="3.70" rx="1.85" fill="#e2474c" stroke="#aeb4bd" stroke-width=".35"/><path d="M11.25 13.35h1.95v3.70h-1.95a1.85 1.85 0 0 1 0-3.70z" fill="#f1f3f6"/><path d="M10.60 14.35h5.20" stroke="#fff" stroke-width=".6" opacity=".55"/></g><g transform="rotate(35 18.3 16.3)"><rect x="14.50" y="14.45" width="7.60" height="3.70" rx="1.85" fill="#f1f3f6" stroke="#aeb4bd" stroke-width=".35"/><path d="M16.35 14.45h1.95v3.70h-1.95a1.85 1.85 0 0 1 0-3.70z" fill="#e2474c"/><path d="M15.70 15.45h5.20" stroke="#fff" stroke-width=".6" opacity=".55"/></g><g transform="rotate(80 9.8 17.5)"><rect x="6.00" y="15.65" width="7.60" height="3.70" rx="1.85" fill="#e2474c" stroke="#aeb4bd" stroke-width=".35"/><path d="M7.85 15.65h1.95v3.70h-1.95a1.85 1.85 0 0 1 0-3.70z" fill="#f1f3f6"/><path d="M7.20 16.65h5.20" stroke="#fff" stroke-width=".6" opacity=".55"/></g><g transform="rotate(-30 14.5 20.3)"><rect x="10.70" y="18.45" width="7.60" height="3.70" rx="1.85" fill="#f1f3f6" stroke="#aeb4bd" stroke-width=".35"/><path d="M12.55 18.45h1.95v3.70h-1.95a1.85 1.85 0 0 1 0-3.70z" fill="#e2474c"/><path d="M11.90 19.45h5.20" stroke="#fff" stroke-width=".6" opacity=".55"/></g><g transform="rotate(20 19.5 21.3)"><rect x="15.70" y="19.45" width="7.60" height="3.70" rx="1.85" fill="#e2474c" stroke="#aeb4bd" stroke-width=".35"/><path d="M17.55 19.45h1.95v3.70h-1.95a1.85 1.85 0 0 1 0-3.70z" fill="#f1f3f6"/><path d="M16.90 20.45h5.20" stroke="#fff" stroke-width=".6" opacity=".55"/></g><g transform="rotate(0 10.5 23.3)"><rect x="7.25" y="21.80" width="6.50" height="3.00" rx="1.50" fill="#e2474c" stroke="#aeb4bd" stroke-width=".35"/><path d="M8.75 21.80h1.75v3.00h-1.75a1.50 1.50 0 0 1 0-3.00z" fill="#f1f3f6"/><path d="M8.45 22.80h4.10" stroke="#fff" stroke-width=".6" opacity=".55"/></g><rect x="16" y="23.100" width="11" height="4.700" rx="2.350" fill="#e4e9ed" stroke="#a9b1ba" stroke-width=".5"/><path d="M21.500 23.100h3.150a2.350 2.350 0 0 1 0 4.700H21.500z" fill="url(#cp)"/><path d="M17.500 24.200h8" stroke="#fff" stroke-width=".8" opacity=".6"/></svg>
<svg style="left:364px;top:13px" width="22" height="24" viewBox="0 0 22 24"><defs><linearGradient id="ck" x1="0" y1="0" x2="1" y2="0"><stop offset="0" stop-color="#f2a018"/><stop offset=".35" stop-color="#f9c132"/><stop offset="1" stop-color="#e8860f"/></linearGradient></defs><ellipse cx="10.5" cy="21.8" rx="9" ry="1.6" fill="#e9c9a0" opacity=".3"/><path d="M0.8 10v6.5c0 2.100 4.300 3.500 9.700 3.500s9.700-1.400 9.700-3.500V10z" fill="url(#ck)"/><path d="M0.8 15.500c0 2.100 4.300 3.500 9.700 3.500s9.700-1.400 9.700-3.500v1c0 2.100-4.300 3.500-9.700 3.500s-9.700-1.400-9.700-3.500z" fill="#d9640a" opacity=".8"/><ellipse cx="10.5" cy="10" rx="9.700" ry="3.900" fill="#4a1d0f"/><path d="M0.8 10v1.800c.6 1 1.100.2 1.600 1.300s.6 2 1.300 2 .6-1.300 1.300-1.300 1 2.900 2 3.200 1.100-1.500 2-1.500 1 2.200 2 2.200 1.200-2.600 2.100-2.800.8 1 1.600 1 1-2.300 1.800-2.500.700 1.200 1.300 1.200.9-1 1.300-2.400V10z" fill="#4a1d0f"/><path d="M4.800 9.300c.5-1.700 1.800-2.200 2.600-3.500.7-1.200 1.700-2 3.100-2s2.300.8 3 2c.8 1.300 2.100 1.800 2.600 3.500-1.300 1.500-3.400 1.900-5.600 1.900s-4.400-.4-5.700-1.900z" fill="#f7f7f7"/><path d="M5.500 9.600c1.500 1 3.300 1.200 5 1.200s3.500-.2 5-1.200" fill="none" stroke="#c9cdd2" stroke-width=".8"/><path d="M8.700 3.800c0-1.500.8-2.400 1.800-2.400s1.900.9 1.900 2.400-.9 2-1.900 2-1.800-.5-1.800-2z" fill="#d8242a"/><circle cx="10" cy="3" r=".5" fill="#ff8a80"/></svg>
<svg style="left:467px;top:10px" width="30" height="28" viewBox="0 0 30 28"><defs><linearGradient id="cg" x1="0" y1="0" x2="1" y2="1"><stop offset="0" stop-color="#cfd9e2"/><stop offset="1" stop-color="#f2f5f8"/></linearGradient></defs><path d="M0.500 23.500h29v2.700a.8.8 0 0 1-.8.800H1.300a.8.8 0 0 1-.8-.8z" fill="#aeb5bc"/><path d="M0.500 24.700h29M0.500 25.900h29" stroke="#e8ebee" stroke-width=".5"/><rect x="0.500" y="0.500" width="29" height="23.500" rx=".8" fill="#f7f8f9" stroke="#c3c8ce" stroke-width=".8"/><rect x="1.800" y="1.800" width="26.400" height="21" fill="url(#cg)"/><path d="M4.500 4h9.500M15 4h3M19 4h6" stroke="#8f99a5" stroke-width="1.400" stroke-dasharray="1 .6" opacity=".8"/><rect x="4" y="6" width="22" height="16" fill="#b3bdc8"/><path d="M5.0 7.0h2.0v2.0h-2.0zM8.0 7.0h2.0v2.0h-2.0zM11.0 7.0h2.0v2.0h-2.0zM14.0 7.0h2.0v2.0h-2.0zM17.0 7.0h2.0v2.0h-2.0zM5.0 10.0h2.0v2.0h-2.0zM8.0 10.0h2.0v2.0h-2.0zM11.0 10.0h2.0v2.0h-2.0zM14.0 10.0h2.0v2.0h-2.0zM17.0 10.0h2.0v2.0h-2.0zM5.0 13.0h2.0v2.0h-2.0zM8.0 13.0h2.0v2.0h-2.0zM11.0 13.0h2.0v2.0h-2.0zM14.0 13.0h2.0v2.0h-2.0zM17.0 13.0h2.0v2.0h-2.0zM5.0 16.0h2.0v2.0h-2.0zM8.0 16.0h2.0v2.0h-2.0zM11.0 16.0h2.0v2.0h-2.0zM14.0 16.0h2.0v2.0h-2.0zM17.0 16.0h2.0v2.0h-2.0zM20.0 16.0h2.0v2.0h-2.0zM23.0 16.0h2.0v2.0h-2.0zM5.0 19.0h2.0v2.0h-2.0zM8.0 19.0h2.0v2.0h-2.0zM11.0 19.0h2.0v2.0h-2.0zM14.0 19.0h2.0v2.0h-2.0zM17.0 19.0h2.0v2.0h-2.0zM20.0 19.0h2.0v2.0h-2.0zM23.0 19.0h2.0v2.0h-2.0z" fill="#fff"/><path d="M20.0 7.0h2.0v2.0h-2.0zM23.0 7.0h2.0v2.0h-2.0zM20.0 10.0h2.0v2.0h-2.0zM23.0 10.0h2.0v2.0h-2.0zM20.0 13.0h2.0v2.0h-2.0zM23.0 13.0h2.0v2.0h-2.0z" fill="#ffc9d2"/></svg>
<svg style="left:576px;top:7px" width="31" height="30" viewBox="0 0 31 30"><defs><linearGradient id="cb" x1="0" y1="0" x2="1" y2="0"><stop offset="0" stop-color="#c98a4a"/><stop offset=".5" stop-color="#b26d2c"/><stop offset="1" stop-color="#c98a4a"/></linearGradient><linearGradient id="cm" x1="0" y1="0" x2="0" y2="1"><stop offset="0" stop-color="#e4e6e8"/><stop offset="1" stop-color="#9da1a6"/></linearGradient></defs><rect x="0.300" y="2.300" width="23.700" height="25.800" rx="1.300" fill="#8a5322" opacity=".55"/><rect x="0.300" y="2" width="23.700" height="25.500" rx="1.300" fill="url(#cb)" stroke="#a5652a" stroke-width=".6"/><rect x="1.500" y="3.200" width="21.300" height="23.100" rx=".8" fill="none" stroke="#e0ad74" stroke-width=".8"/><rect x="3" y="4.500" width="18.500" height="20.500" fill="#fdfdfd" stroke="#c9d4df" stroke-width=".6"/><path d="M9.500 0.300h5.300c.8 0 1.300.5 1.300 1.300V3h.6v2.800H7.500V3h.7V1.600c0-.8.500-1.300 1.300-1.300z" fill="url(#cm)" stroke="#8c9096" stroke-width=".5"/><g stroke="#3a9a12" stroke-width="1" fill="none"><path d="M5.200 8.700l1.300 1.300 2.300-2.700M5.200 12.700l1.300 1.300 2.300-2.700M5.200 16.700l1.300 1.300 2.300-2.700M5.200 20.700l1.300 1.300 2.300-2.700"/></g><path d="M10.500 8.500h1.500M13 8.500h5M10.500 12.500h2.500M14.500 12.500h3.500M10.500 16.500h4.500M16.500 16.500h2M10.500 20.500h3.500" stroke="#a9aeb4" stroke-width="1"/><circle cx="22.600" cy="22.400" r="7.400" fill="#8f9398"/><circle cx="22.600" cy="22.400" r="6.700" fill="#e3e5e7"/><circle cx="22.600" cy="22.400" r="5.300" fill="#aeb1b5"/><circle cx="22.600" cy="22.400" r="4.700" fill="#fdfdfd"/><path d="M22.600 19v4.600M20.800 22.400h5.600" stroke="#222" stroke-width=".8"/><circle cx="22.600" cy="22.400" r=".8" fill="#fff" stroke="#222" stroke-width=".4"/><circle cx="22.600" cy="25.700" r=".55" fill="#222"/><circle cx="19.500" cy="22.400" r=".5" fill="#222"/></svg>
<svg style="left:703px;top:10px" width="30" height="28" viewBox="0 0 30 28"><defs><linearGradient id="dh" x1="0" y1="0" x2="1" y2="0"><stop offset="0" stop-color="#b99a45"/><stop offset=".5" stop-color="#ecd98e"/><stop offset="1" stop-color="#b99a45"/></linearGradient><linearGradient id="dg" x1="0" y1="0" x2="0" y2="1"><stop offset="0" stop-color="#b4e08a"/><stop offset=".8" stop-color="#8fcf5c"/><stop offset="1" stop-color="#5d9a30"/></linearGradient></defs><path d="M0.300 17h20.400v2.200a.6.600 0 0 1-.6.600H0.900a.6.600 0 0 1-.6-.6z" fill="#b4bbc3"/><rect x="0.300" y="0.300" width="20.400" height="17.500" rx=".7" fill="#f6f7f9" stroke="#c5cad0" stroke-width=".7"/><rect x="1.500" y="1.500" width="18" height="15.200" fill="#e3e9ef"/><path d="M3 3.200h5.500M9.500 3.200h1.500M12 3.200h5" stroke="#7f8a97" stroke-width=".9" stroke-dasharray=".9 .5" opacity=".7"/><rect x="3" y="5" width="15" height="11" fill="#b1bcc8"/><path d="M4.0 6.0h1.0v1.0h-1.0zM6.0 6.0h1.0v1.0h-1.0zM8.0 6.0h1.0v1.0h-1.0zM10.0 6.0h1.0v1.0h-1.0zM12.0 6.0h1.0v1.0h-1.0zM14.0 6.0h1.0v1.0h-1.0zM4.0 8.0h1.0v1.0h-1.0zM6.0 8.0h1.0v1.0h-1.0zM8.0 8.0h1.0v1.0h-1.0zM10.0 8.0h1.0v1.0h-1.0zM12.0 8.0h1.0v1.0h-1.0zM14.0 8.0h1.0v1.0h-1.0zM4.0 10.0h1.0v1.0h-1.0zM6.0 10.0h1.0v1.0h-1.0zM8.0 10.0h1.0v1.0h-1.0zM10.0 10.0h1.0v1.0h-1.0zM12.0 10.0h1.0v1.0h-1.0zM14.0 10.0h1.0v1.0h-1.0zM4.0 12.0h1.0v1.0h-1.0zM6.0 12.0h1.0v1.0h-1.0zM8.0 12.0h1.0v1.0h-1.0zM10.0 12.0h1.0v1.0h-1.0zM12.0 12.0h1.0v1.0h-1.0zM14.0 12.0h1.0v1.0h-1.0zM4.0 14.0h1.0v1.0h-1.0zM6.0 14.0h1.0v1.0h-1.0zM8.0 14.0h1.0v1.0h-1.0zM10.0 14.0h1.0v1.0h-1.0zM12.0 14.0h1.0v1.0h-1.0zM14.0 14.0h1.0v1.0h-1.0z" fill="#fff"/><path d="M16.0 6.0h1.0v1.0h-1.0zM16.0 8.0h1.0v1.0h-1.0zM16.0 10.0h1.0v1.0h-1.0zM16.0 12.0h1.0v1.0h-1.0zM16.0 14.0h1.0v1.0h-1.0z" fill="#ff9aa5"/><path d="M18 20.500c-.5-3 -.3-7 .5-9.500s2.300-3.300 4.400-3.300 3.700 1 4.500 3.300 1 6.500.5 9.500z" fill="url(#dh)"/><path d="M20.200 13c0-2.300 1-3.800 2.800-3.800s2.800 1.500 2.800 3.800c0 2.500-1.200 4.300-2.800 4.300s-2.800-1.800-2.800-4.300z" fill="#f3cfc0"/><path d="M21.300 12.600h1.200M23.600 12.600h1.200" stroke="#9a7a70" stroke-width=".5"/><path d="M22.300 15.300h1.500" stroke="#c9877a" stroke-width=".5"/><path d="M19.800 12.500c.2-2.500 1.300-3.800 3.200-3.800s3 1.300 3.200 3.800c-.8-1.600-1.800-2.400-3.200-2.400s-2.400.8-3.200 2.400z" fill="#d9c372"/><path d="M16.200 26.500c0-4.500 1-7.300 3.500-7.800l1.800-.5h3.100l1.800.5c2.500.5 3.500 3.300 3.500 7.800 0 .5-.3.800-.9.800H17.100c-.6 0-.9-.3-.9-.8z" fill="url(#dg)"/><path d="M21.200 18l1.800 3.500 1.800-3.500z" fill="#f0c7b6"/><path d="M21.900 17h2.200v2h-2.200z" fill="#e9bfae"/></svg>
<svg style="left:869px;top:10px" width="21" height="28" viewBox="0 0 21 28"><defs><linearGradient id="tr" x1="0" y1="0" x2="1" y2="0"><stop offset="0" stop-color="#ef6b6f"/><stop offset=".35" stop-color="#ffb0b0"/><stop offset=".6" stop-color="#e8484d"/><stop offset="1" stop-color="#d32f36"/></linearGradient><linearGradient id="ty" x1="0" y1="0" x2="1" y2="0"><stop offset="0" stop-color="#f7df3a"/><stop offset=".35" stop-color="#fff6a0"/><stop offset=".6" stop-color="#f7d51e"/><stop offset="1" stop-color="#eeb90c"/></linearGradient></defs><path d="M1.300 0.500v22.400a3.700 3.700 0 0 0 7.400 0V0.500z" fill="#fbfbfe" stroke="#8a90b0" stroke-width=".9"/><path d="M2 12c1.800-.5 4-.9 6-.9v11.700a3 3 0 0 1-6 0z" fill="url(#tr)"/><path d="M0.700 0.600h8.600" stroke="#7d84a8" stroke-width="1.100"/><path d="M1.800 2.500h6.400" stroke="#d5d8e6" stroke-width=".8"/><path d="M12.300 0.500v22.400a3.700 3.700 0 0 0 7.400 0V0.500z" fill="#fbfbfe" stroke="#8a90b0" stroke-width=".9"/><path d="M13 8.800c1.800-.4 4-.6 6-.6v14.600a3 3 0 0 1-6 0z" fill="url(#ty)"/><path d="M11.700 0.600h8.600" stroke="#7d84a8" stroke-width="1.100"/><path d="M12.800 2.500h6.400" stroke="#d5d8e6" stroke-width=".8"/></svg>
<svg style="left:1003px;top:8px" width="24" height="31" viewBox="0 0 24 31"><defs><linearGradient id="rp" x1="0" y1="0" x2="1" y2="1"><stop offset="0" stop-color="#dbe4ea"/><stop offset=".5" stop-color="#f6f8fa"/><stop offset="1" stop-color="#ffffff"/></linearGradient></defs><rect x="0.700" y="1" width="22.800" height="29.300" rx=".6" fill="#9aa0a8" opacity=".55"/><rect x="0.400" y="0.400" width="22.800" height="29" rx=".6" fill="url(#rp)" stroke="#c9ced4" stroke-width=".6"/><path d="M0.700 0.700h3.300v28.400H0.700z" fill="#d5dde4" opacity=".7"/><path d="M4 0.700v28.400" stroke="#b9c1c9" stroke-width=".6"/><circle cx="2.300" cy="11.500" r=".55" fill="#667"/><circle cx="2.300" cy="17.500" r=".55" fill="#667"/><g stroke="#4d5560" stroke-width="1"><path d="M7 4.500h2.500M10 4.500h1M7 8.500h3.500M11 8.500h1M7 12.500h1.500M9 12.500h2M7 16.500h2.500M11.300 16.500h.8M7.300 20.500h1.500M10 20.500h1.700M7 24.500h1.500M9 24.500h2"/></g><path d="M14 13h2v5.800h-2z" fill="#5059b5"/><path d="M17 11h2v7.800h-2z" fill="#7d8be0"/><path d="M20 15h1.900v3.800H20z" fill="#a3b0f0"/><path d="M15.300 23.400h3.500" stroke="#4d5560" stroke-width=".9" stroke-dasharray="1.200 .4"/></svg>
<svg style="left:1101px;top:10px" width="32" height="26" viewBox="0 0 32 26"><defs><linearGradient id="tb" x1="0" y1="0" x2="0" y2="1"><stop offset="0" stop-color="#dcdcdc"/><stop offset=".55" stop-color="#b2b2b2"/><stop offset=".72" stop-color="#8e8e8e"/><stop offset="1" stop-color="#bcbcbc"/></linearGradient><linearGradient id="tu" x1="0" y1="0" x2="0" y2="1"><stop offset="0" stop-color="#e6e6e6"/><stop offset="1" stop-color="#a9a9a9"/></linearGradient></defs><path d="M6.600 0.300h21.400v3.500H6.600z" fill="#f1f1f1" stroke="#b5b5b5" stroke-width=".5"/><path d="M6.300 3h22l2 1.500v5H5.300V4.500z" fill="url(#tu)" stroke="#909090" stroke-width=".5"/><path d="M1 7.800c1.800-.3 2.800-1.300 3.600-2.600l1.800-1.100" fill="none" stroke="#8e8e8e" stroke-width="1.200"/><ellipse cx="17.500" cy="5.300" rx="5.300" ry="1.200" fill="#4a4a4a"/><ellipse cx="17.500" cy="4.600" rx="1.600" ry=".9" fill="#2a2a2a"/><path d="M17.100 3.800h.8v1.200h-.8z" fill="#ddd"/><path d="M5.300 9h25.400c.5 0 .8.300.8.800l.3 13.500c0 1-.5 1.500-1.500 1.500H5c-1 0-1.500-.5-1.500-1.500l1-13.500c0-.5.300-.8.800-.8z" fill="url(#tb)" stroke="#8a8a8a" stroke-width=".5"/><path d="M25 10.500h5" stroke="#f0f0f0" stroke-width=".8"/><ellipse cx="17.500" cy="15.300" rx="11.200" ry="4.400" fill="#55534e"/><path d="M9 12.200h17l2 3-2 3h-4v1.300h-9.500v-1.300H9l-2-3z" fill="#d9cf8e" opacity=".55"/><path d="M9.50 12.10h.95v.95h-.95zM10.95 12.10h.95v.95h-.95zM12.40 12.10h.95v.95h-.95zM13.85 12.10h.95v.95h-.95zM15.30 12.10h.95v.95h-.95zM16.75 12.10h.95v.95h-.95zM18.20 12.10h.95v.95h-.95zM19.65 12.10h.95v.95h-.95zM21.10 12.10h.95v.95h-.95zM22.55 12.10h.95v.95h-.95zM24.00 12.10h.95v.95h-.95zM25.45 12.10h.95v.95h-.95zM8.75 13.50h.95v.95h-.95zM10.20 13.50h.95v.95h-.95zM11.65 13.50h.95v.95h-.95zM13.10 13.50h.95v.95h-.95zM14.55 13.50h.95v.95h-.95zM16.00 13.50h.95v.95h-.95zM17.45 13.50h.95v.95h-.95zM18.90 13.50h.95v.95h-.95zM20.35 13.50h.95v.95h-.95zM21.80 13.50h.95v.95h-.95zM23.25 13.50h.95v.95h-.95zM24.70 13.50h.95v.95h-.95zM26.15 13.50h.95v.95h-.95zM7.50 14.90h.95v.95h-.95zM8.95 14.90h.95v.95h-.95zM10.40 14.90h.95v.95h-.95zM11.85 14.90h.95v.95h-.95zM13.30 14.90h.95v.95h-.95zM14.75 14.90h.95v.95h-.95zM16.20 14.90h.95v.95h-.95zM17.65 14.90h.95v.95h-.95zM19.10 14.90h.95v.95h-.95zM20.55 14.90h.95v.95h-.95zM22.00 14.90h.95v.95h-.95zM23.45 14.90h.95v.95h-.95zM24.90 14.90h.95v.95h-.95zM26.35 14.90h.95v.95h-.95zM8.75 16.30h.95v.95h-.95zM10.20 16.30h.95v.95h-.95zM11.65 16.30h.95v.95h-.95zM13.10 16.30h.95v.95h-.95zM14.55 16.30h.95v.95h-.95zM16.00 16.30h.95v.95h-.95zM17.45 16.30h.95v.95h-.95zM18.90 16.30h.95v.95h-.95zM20.35 16.30h.95v.95h-.95zM21.80 16.30h.95v.95h-.95zM23.25 16.30h.95v.95h-.95zM24.70 16.30h.95v.95h-.95zM26.15 16.30h.95v.95h-.95zM12.50 17.60h.95v.95h-.95zM13.95 17.60h.95v.95h-.95zM15.40 17.60h.95v.95h-.95zM16.85 17.60h.95v.95h-.95zM18.30 17.60h.95v.95h-.95zM19.75 17.60h.95v.95h-.95zM21.20 17.60h.95v.95h-.95z" fill="#f6eeb0"/></svg>
<svg style="left:1232px;top:7px" width="22" height="30" viewBox="0 0 22 30"><defs><linearGradient id="cs" x1="0" y1="0" x2="0" y2="1"><stop offset="0" stop-color="#c3d6e7"/><stop offset=".22" stop-color="#dfeaf4"/><stop offset="1" stop-color="#f7fafd"/></linearGradient></defs><rect x="0.600" y="2.900" width="20.600" height="27" rx="2.400" fill="#5f7f9e" opacity=".5"/><rect x="0.500" y="2.500" width="20.600" height="26.700" rx="2.400" fill="url(#cs)" stroke="#6f90b1" stroke-width="1"/><rect x="1.600" y="3.600" width="18.400" height="24.500" rx="1.500" fill="none" stroke="#fff" stroke-width=".7" opacity=".8"/><path d="M5.300 7.300V5.500h10.600v1.800z" fill="#9fb6cc"/><rect x="6.300" y="0.400" width="8.700" height="5.800" fill="#fcfcfc" stroke="#a8adb3" stroke-width=".6"/><path d="M7.800 2.500h5.700M7.800 4.400h5.700" stroke="#b9bdc2" stroke-width=".8"/><rect x="3" y="9" width="15" height="4.800" fill="#4c4f54"/><path d="M10 10.300h7.500" stroke="#b5b8bc" stroke-width=".9"/><path d="M10.500 12.300h7" stroke="#6a6d72" stroke-width=".8"/><path d="M4.300 9v4.800M6.300 9v4.800M8.300 9v4.800" stroke="#7fe01c" stroke-width=".9" stroke-dasharray="1 .4"/><path d="M3.500 10.500h6M3.500 13h6" stroke="#7fe01c" stroke-width=".6"/><path d="M3.0 15.6h3v1.800h-3zM7.0 15.6h3v1.800h-3zM11.1 15.6h3v1.800h-3zM15.1 15.6h3v1.800h-3zM3.0 18.6h3v1.800h-3zM7.0 18.6h3v1.800h-3zM11.1 18.6h3v1.800h-3zM15.1 18.6h3v1.800h-3zM3.0 21.6h3v1.800h-3zM7.0 21.6h3v1.800h-3zM11.1 21.6h3v1.800h-3zM15.1 21.6h3v1.800h-3z" fill="#b9b9b9"/><path d="M3 15.400h15.200M3 18.400h15.200M3 21.400h15.200" stroke="#e6e9ec" stroke-width=".5"/><rect x="3" y="25.100" width="7" height="2" fill="#d3151b"/><rect x="11.200" y="25.100" width="7" height="2" fill="#5db82e"/><path d="M11.200 25.300h7" stroke="#2f7d12" stroke-width=".5"/><path d="M3 25.300h7" stroke="#8e0c10" stroke-width=".5"/></svg>
<svg style="left:1317px;top:10px" width="33" height="27" viewBox="0 0 33 27"><defs><linearGradient id="ph" x1="0" y1="0" x2="0" y2="1"><stop offset="0" stop-color="#f2201c"/><stop offset=".7" stop-color="#e00f0c"/><stop offset="1" stop-color="#b40805"/></linearGradient></defs><path d="M5.300 12.500c-2.800 1.800-4.300 4.300-4 6.500.4 2.800 4 3.600 10 2.700" fill="none" stroke="#222" stroke-width="1.700" stroke-linecap="round"/><path d="M6.300 13.500l2 2.300 4-2.300.3-2.500-2.800-1z" fill="#169ad3"/><path d="M26 5l2 2.400 4.200-.7.300-2.300z" fill="#169ad3"/><path d="M5.600 11.500C6.500 7 12 3 18.500 1.300 23 .1 27.500-.1 30.300.5c1.700.4 2.500 1.500 2.300 3.200l-.2 1.500-6.700.3c-.3-1-.8-1.500-1.800-1.600-4-.2-9.300 2.400-11.500 6.400l-.6 1.700-5.200 2.500c-.8-.8-1.200-1.800-1-3z" fill="url(#ph)"/><path d="M8 8.500C11 4.500 17 1.800 23 1.200" fill="none" stroke="#ff6a60" stroke-width=".8" opacity=".7"/><path d="M14.300 11.300l1-.9h1l.5.600h6.400l.5-.6h1l1 .9c.6.300 1 .8 1.200 1.500l2.300 8.700c.4 1.600-.3 2.800-1.800 3.200-2.500.5-5 .6-7.500.6s-5-.1-7.300-.6c-1.500-.4-2.100-1.600-1.800-3.200l2-8.700c.2-.8.700-1.300 1.500-1.500z" fill="url(#ph)"/><path d="M11 21.500c2.800.9 5.800 1.300 8.800 1.300s6.300-.4 9.300-1.300" fill="none" stroke="#a30705" stroke-width=".9" opacity=".8"/><ellipse cx="19.800" cy="15.200" rx="5.200" ry="3.700" fill="#f3d3d3" stroke="#b40c0a" stroke-width=".7"/><ellipse cx="19.800" cy="15.200" rx="3.700" ry="2.500" fill="none" stroke="#c0292a" stroke-width=".9" stroke-dasharray=".8 .6"/><ellipse cx="19.800" cy="15" rx="2.200" ry="1.350" fill="#111"/></svg>
<svg style="left:15px;top:60px" width="16" height="16" viewBox="0 0 16 16"><ellipse cx="8" cy="14.800" rx="6.500" ry="1" fill="#000" opacity=".10"/><path d="M9.300 9.400l5 4.700" stroke="#7f8388" stroke-width="2" stroke-linecap="round"/><path d="M9.800 9.900l4.300 4" stroke="#e9ecef" stroke-width=".9" stroke-dasharray=".9 .7"/><circle cx="5.600" cy="5.500" r="5" fill="#e3eaf0" stroke="#a09c94" stroke-width=".8"/><path d="M1.300 5.200a4.300 4.300 0 0 1 8.600 0c-1.500-.9-2.500-1-4.300-1s-2.800.1-4.300 1z" fill="#cbd7e1"/><circle cx="5.600" cy="5.500" r="4.300" fill="none" stroke="#f7f9fb" stroke-width=".6" opacity=".9"/></svg>
<svg style="left:175px;top:61px" width="16" height="16" viewBox="0 0 16 16"><ellipse cx="8" cy="14.800" rx="6.500" ry="1" fill="#000" opacity=".10"/><path d="M9.300 9.400l5 4.700" stroke="#7f8388" stroke-width="2" stroke-linecap="round"/><path d="M9.800 9.900l4.300 4" stroke="#e9ecef" stroke-width=".9" stroke-dasharray=".9 .7"/><circle cx="5.600" cy="5.500" r="5" fill="#e3eaf0" stroke="#a09c94" stroke-width=".8"/><path d="M1.300 5.200a4.300 4.300 0 0 1 8.600 0c-1.500-.9-2.500-1-4.300-1s-2.800.1-4.300 1z" fill="#cbd7e1"/><circle cx="5.600" cy="5.500" r="4.300" fill="none" stroke="#f7f9fb" stroke-width=".6" opacity=".9"/></svg>
<svg style="left:1007.2px;top:175.3px" width="16" height="16" viewBox="0 0 16 16"><ellipse cx="8" cy="14.800" rx="6.500" ry="1" fill="#000" opacity=".10"/><path d="M9.300 9.400l5 4.700" stroke="#7f8388" stroke-width="2" stroke-linecap="round"/><path d="M9.800 9.900l4.300 4" stroke="#e9ecef" stroke-width=".9" stroke-dasharray=".9 .7"/><circle cx="5.600" cy="5.500" r="5" fill="#e3eaf0" stroke="#a09c94" stroke-width=".8"/><path d="M1.300 5.200a4.300 4.300 0 0 1 8.600 0c-1.500-.9-2.500-1-4.300-1s-2.800.1-4.300 1z" fill="#cbd7e1"/><circle cx="5.600" cy="5.500" r="4.300" fill="none" stroke="#f7f9fb" stroke-width=".6" opacity=".9"/></svg>
<svg style="left:11px;top:175px" width="17" height="16" viewBox="0 0 17 16"><rect x="0.300" y="2.600" width="15.700" height="13" rx="1.600" fill="#c9b98f" opacity=".55"/><rect x="0.200" y="2.200" width="15.700" height="12.900" rx="1.600" fill="#fbf1da" stroke="#eadcb8" stroke-width=".5"/><path d="M2.200 7.200h1.500M4.200 7.200h2.300M2.200 9.300h1M3.700 9.300h3" stroke="#69a0d2" stroke-width=".9"/><path d="M2.200 12.500h11.500" stroke="#dccba2" stroke-width=".9"/><rect x="9" y="3" width="6" height="6" rx=".5" fill="#fff"/><path d="M10.300 8.300c0-1.300.4-1.400 1-1.600-.8-.7-.5-2.300.7-2.300s1.500 1.600.7 2.300c.6.200 1 .3 1 1.600z" fill="#444"/><path d="M3.600 0.600l.7 1.700 1.700-.8-.8 1.700 1.700.7-1.700.7.800 1.700-1.700-.8-.7 1.700-.7-1.700-1.700.8.800-1.700-1.700-.7 1.700-.7-.8-1.700 1.700.8z" fill="#ffb400"/></svg>
<svg style="left:213px;top:175px" width="17" height="16" viewBox="0 0 17 16"><rect x="0.300" y="2.600" width="15.700" height="13" rx="1.600" fill="#c9b98f" opacity=".55"/><rect x="0.200" y="2.200" width="15.700" height="12.900" rx="1.600" fill="#fbf1da" stroke="#eadcb8" stroke-width=".5"/><path d="M2.200 7.200h1.500M4.200 7.200h2.300M2.200 9.300h1M3.700 9.300h3" stroke="#69a0d2" stroke-width=".9"/><path d="M2.200 12.500h11.500" stroke="#dccba2" stroke-width=".9"/><rect x="9" y="3" width="6" height="6" rx=".5" fill="#fff"/><path d="M10.300 8.300c0-1.300.4-1.400 1-1.600-.8-.7-.5-2.300.7-2.300s1.500 1.600.7 2.300c.6.200 1 .3 1 1.600z" fill="#444"/><path d="M3.600 0.600l.7 1.700 1.700-.8-.8 1.700 1.700.7-1.700.7.800 1.700-1.700-.8-.7 1.700-.7-1.700-1.700.8.800-1.700-1.700-.7 1.700-.7-.8-1.700 1.700.8z" fill="#ffb400"/></svg>
<svg style="left:1087px;top:179px" width="16" height="10" viewBox="0 0 16 10"><rect x="0.500" y="0.600" width="15" height="8.200" rx="1.600" fill="#fff" stroke="#b3a597" stroke-width=".8"/><path d="M3.800 2.300v4.800M3 2.300h1.600M3 7.100h1.600" stroke="#555" stroke-width=".6"/></svg>
<svg style="left:275px;top:211px" width="17" height="17" viewBox="0 0 17 17"><path d="M1.500 2.500c3-1.500 8-1.800 11.500-1.500v3H1.500z" fill="#cfe5bf" stroke="#86c065" stroke-width=".6"/><path d="M0.800 3.300l15 1-.3 11.200-14.900-1.800z" fill="#f2f8ec" stroke="#8ac46a" stroke-width=".6"/><path d="M0.800 3.300l.5-.8v10.700l-.7.500z" fill="#7dbb5b"/><path d="M4.300 5.300l4.200 5M8.500 5.300l-4.200 5" stroke="#2c7a1c" stroke-width="1.700"/><path d="M11 5.800l3.500.3v1.500l-3.500-.3zM11 8.500l3.500.3v1.500l-3.500-.3zM11 11.200l3.500.3v1.600l-3.500-.4zM3.300 11l2.700.3v1.500l-2.700-.3zM6.800 11.300l2.900.3v1.600l-2.900-.3zM10.300 8.400v-2.700" fill="#419428"/><path d="M0.700 14l14.800 1.800" stroke="#999" stroke-width=".6" opacity=".6"/></svg>
<div style="left:480px;top:25px;width:22px;height:18px;border-radius:50%;background:#e0000b"></div>
<span class="t" style="left:44.8px;top:14.5px;font-size:13px;line-height:16px;letter-spacing:-0.15px;color:#4c4c4c;">Регистрация</span>
<span class="t" style="left:175.9px;top:14.5px;font-size:13px;line-height:16px;letter-spacing:-0.10px;color:#4c4c4c;">Пациенты</span>
<span class="t" style="left:292.4px;top:14.5px;font-size:13px;line-height:16px;letter-spacing:0.21px;color:#4c4c4c;">Отпуск</span>
<span class="t" style="left:391.4px;top:14.5px;font-size:13px;line-height:16px;letter-spacing:-0.02px;color:#4c4c4c;">Питание</span>
<span class="t" style="left:498.9px;top:14.5px;font-size:13px;line-height:16px;letter-spacing:-0.18px;color:#4c4c4c;">События</span>
<span class="t" style="left:608.0px;top:14.5px;font-size:13px;line-height:16px;letter-spacing:-0.24px;color:#4c4c4c;">Расписания</span>
<span class="t" style="left:733.4px;top:14.5px;font-size:13px;line-height:16px;letter-spacing:0.05px;color:#4c4c4c;">Диспетчеризация</span>
<span class="t" style="left:896.2px;top:14.5px;font-size:13px;line-height:16px;letter-spacing:0.09px;color:#4c4c4c;">Лаборатория</span>
<span class="t" style="left:1033.0px;top:14.5px;font-size:13px;line-height:16px;letter-spacing:-0.21px;color:#4c4c4c;">Отчёты</span>
<span class="t" style="left:1133.8px;top:14.5px;font-size:13px;line-height:16px;letter-spacing:-0.24px;color:#4c4c4c;">Ввод текста</span>
<span class="t" style="left:1260.1px;top:14.5px;font-size:13px;line-height:16px;letter-spacing:-0.41px;color:#4c4c4c;">Касса</span>
<span class="t" style="left:1349.4px;top:14.5px;font-size:13px;line-height:16px;letter-spacing:0.20px;color:#4c4c4c;">Звонки</span>
<span class="t" style="left:35.7px;top:57.8px;font-size:13.5px;line-height:17px;letter-spacing:-0.14px;color:#222;">Поиск пациентов</span>
<span class="t" style="left:196.0px;top:59.8px;font-size:13.5px;line-height:17px;letter-spacing:-0.22px;color:#333;">Забронированные</span>
<span class="t" style="left:347.4px;top:59.8px;font-size:13.5px;line-height:17px;letter-spacing:-0.24px;color:#333;">Импорт амбулаторных карт</span>
<span class="t" style="left:553.4px;top:59.8px;font-size:13.5px;line-height:17px;letter-spacing:-0.20px;color:#333;">Расширенный поиск</span>
<span class="t" style="left:3.1px;top:94.5px;font-size:13px;line-height:16px;letter-spacing:-0.21px;">ФИО:</span>
<span class="t" style="left:3.1px;top:117.5px;font-size:13px;line-height:16px;letter-spacing:-0.09px;">Приезд с:</span>
<span class="t" style="left:3.1px;top:143.5px;font-size:13px;line-height:16px;letter-spacing:-0.29px;">Отъезд с:</span>
<span class="t" style="left:166.4px;top:117.5px;font-size:13px;line-height:16px;letter-spacing:0.10px;">по:</span>
<span class="t" style="left:166.4px;top:143.5px;font-size:13px;line-height:16px;letter-spacing:0.10px;">по:</span>
<span class="t" style="left:71.7px;top:117.3px;font-size:12px;line-height:15px;letter-spacing:0.23px;font-style:italic;color:#bcbcbc;">Выберите д</span>
<span class="t" style="left:71.7px;top:142.3px;font-size:12px;line-height:15px;letter-spacing:0.23px;font-style:italic;color:#bcbcbc;">Выберите д</span>
<span class="t" style="left:193.7px;top:117.3px;font-size:12px;line-height:15px;letter-spacing:0.23px;font-style:italic;color:#bcbcbc;">Выберите д</span>
<span class="t" style="left:193.7px;top:142.3px;font-size:12px;line-height:15px;letter-spacing:0.23px;font-style:italic;color:#bcbcbc;">Выберите д</span>
<span class="t" style="left:291.2px;top:117.5px;font-size:13px;line-height:16px;letter-spacing:0.10px;">Лечащий врач:</span>
<span class="t" style="left:291.2px;top:143.5px;font-size:13px;line-height:16px;letter-spacing:0.04px;">Программа:</span>
<span class="t" style="left:976.3px;top:94.5px;font-size:13px;line-height:16px;letter-spacing:0.15px;">№ Истории:</span>
<span class="t" style="left:975.4px;top:143.5px;font-size:13px;line-height:16px;letter-spacing:-0.08px;">Комната:</span>
<span class="t" style="left:1086.1px;top:143.5px;font-size:13px;line-height:16px;letter-spacing:-0.18px;">Этаж:</span>
<span class="t" style="left:1177.4px;top:143.5px;font-size:13px;line-height:16px;letter-spacing:-0.12px;">Тип:</span>
<span class="t" style="left:1222.4px;top:93.5px;font-size:13px;line-height:16px;letter-spacing:-0.04px;">Искать среди закрытых историй</span>
<span class="t" style="left:30.6px;top:174.5px;font-size:13px;line-height:16px;letter-spacing:0.07px;color:#fff;">Добавить историю болезни</span>
<span class="t" style="left:232.8px;top:174.5px;font-size:13px;line-height:16px;letter-spacing:0.03px;color:#fff;">Добавить амбулаторную карту</span>
<span class="t" style="left:1026.9px;top:174.5px;font-size:13px;line-height:16px;letter-spacing:0.41px;color:#fff;">Поиск</span>
<span class="t" style="left:1106.4px;top:174.5px;font-size:13px;line-height:16px;letter-spacing:-0.12px;color:#fff;">Очистить фильтр</span>
<span class="t" style="left:1229.2px;top:174.5px;font-size:13px;line-height:16px;letter-spacing:-0.03px;color:#fff;">Сохранить параметры поиска</span>
<span class="t" style="left:7.8px;top:211.5px;font-size:13px;line-height:16px;letter-spacing:-0.15px;">Найдено записей: 5553</span>
<span class="t" style="left:158.9px;top:211.5px;font-size:13px;line-height:16px;letter-spacing:0.14px;color:#fff;">Выбор колонок</span>
<span class="t" style="left:296.0px;top:211.5px;font-size:13px;line-height:16px;letter-spacing:-0.50px;color:#fff;">Excel</span>
<span class="t" style="left:7.8px;top:247.5px;font-size:10px;line-height:12px;letter-spacing:0.13px;color:#3a3a3a;">Группировка по:</span>
<span class="t" style="left:125.8px;top:244.5px;font-size:13px;line-height:16px;letter-spacing:-0.40px;color:#222;">Статус</span>
<span class="t" style="left:60.2px;top:284.5px;font-size:13px;line-height:16px;font-weight:700;">№</span>
<span class="t" style="left:179.8px;top:284.5px;font-size:13px;line-height:16px;letter-spacing:0.11px;font-weight:700;">Пациент</span>
<span class="t" style="left:499.8px;top:284.5px;font-size:13px;line-height:16px;letter-spacing:0.09px;font-weight:700;">Комната</span>
<span class="t" style="left:739.4px;top:284.5px;font-size:13px;line-height:16px;letter-spacing:-0.27px;font-weight:700;">Возраст</span>
<span class="t" style="left:839.2px;top:284.5px;font-size:13px;line-height:16px;letter-spacing:0.21px;font-weight:700;">Лечащий врач</span>
<span class="t" style="left:1090.0px;top:284.5px;font-size:13px;line-height:16px;letter-spacing:0.13px;font-weight:700;">Программа</span>
<span class="t" style="left:1309.7px;top:276.5px;font-size:13px;line-height:16px;letter-spacing:0.08px;font-weight:700;">Дата</span>
<span class="t" style="left:1309.7px;top:292.5px;font-size:13px;line-height:16px;letter-spacing:0.03px;font-weight:700;">приезда</span>
<span class="t" style="left:26.1px;top:323.5px;font-size:13px;line-height:16px;letter-spacing:-0.15px;font-weight:700;">Временный выезд</span>
<span class="t" style="left:26.1px;top:347.5px;font-size:13px;line-height:16px;letter-spacing:-0.11px;font-weight:700;">ИБ закрыта и сдана в архив</span>
<span class="t" style="left:483.7px;top:26.7px;font-size:12.5px;line-height:16px;letter-spacing:0.10px;color:#fff;-webkit-text-stroke:.25px #fff;">93</span>
</body></html>
